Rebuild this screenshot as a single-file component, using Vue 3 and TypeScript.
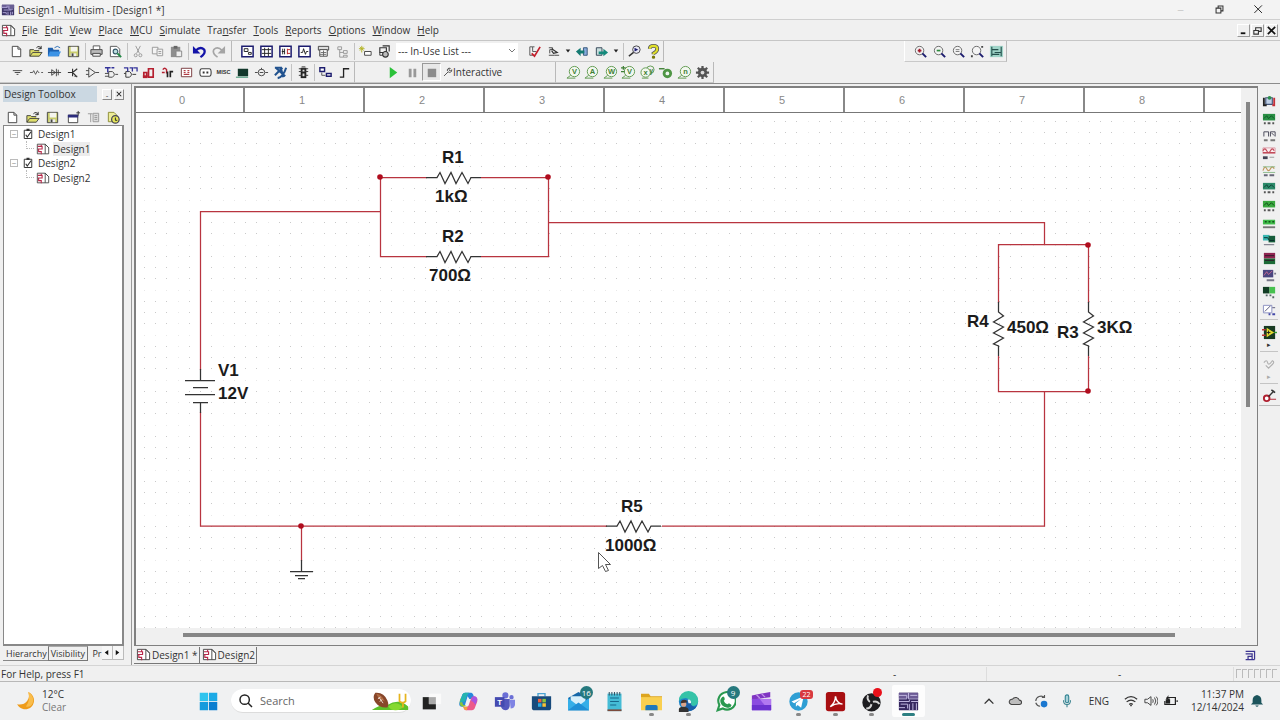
<script setup lang="ts">
import { h } from 'vue'

interface Shape {
  d?: string
  t?: string
  x?: number
  y?: number
  s?: number
  f?: string
  k?: string
  w?: number
}

const disc = (x: number, y: number, r: number) =>
  `M${x - r} ${y}a${r} ${r} 0 1 0 ${2 * r} 0a${r} ${r} 0 1 0 ${-2 * r} 0z`
const box = (x: number, y: number, w: number, ht: number) => `M${x} ${y}h${w}v${ht}h${-w}z`
const fill = (d: string, f: string): Shape => ({ d, f })
const line = (d: string, k: string, w = 1, f = 'none'): Shape => ({ d, k, w, f })
const label = (t: string, x: number, y: number, s: number, f: string): Shape => ({ t, x, y, s, f })

const ink = '#444'
const navy = '#1c1c6e'
const olive = '#5f9a4f'
const lens = (inside: Shape[]): Shape[] => [
  line(disc(7, 7, 4.5), '#666', 1, '#f4f4f4'),
  line('M10 10l4 4', navy, 2),
  ...inside,
]
const probe = (t: string): Shape[] => [
  line(disc(9, 7, 5.5), olive, 1, '#f2f7ef'),
  line('M5 11l-4 3h9', olive),
  label(t, 9, 10, 8, '#3f7f35'),
]
const framed = (inside: Shape[]): Shape[] => [
  line(box(2, 2.5, 12, 11), navy, 1.6, '#fff'),
  ...inside,
]
const instrument = (top: string, mark: string, base = '#555'): Shape[] => [
  fill(box(1, 2, 13, 7), top),
  line('M2 7l3 -3 2 3 3 -3 3 3', mark),
  fill(box(2, 11, 2, 2) + box(6, 11, 3, 2) + box(11, 11, 2, 2), base),
]
const schematic: Shape[] = [
  line('M1.5 2.5h9l4 4v7h-13z', ink, 1, '#fff'),
  line('M10.5 2.5v11M10.5 2.5l4 4', ink),
  line('M2 5h5v3h-4v3h3v3M6 3v2M2 8h2', '#b8284a', 1.2),
]

const icons: Record<string, Shape[]> = {
  app: [
    fill(box(1, 2, 14, 12), '#3d3568'),
    fill(box(1, 2, 14, 4), '#6a5f94'),
    line('M1 5h6v-2M9 3v4h5M3 8h9M2 11h4v2M8 10v4M11 10v4M13 10v3', '#b7aee0'),
  ],
  schematic,
  blank: [line('M3.5 2.5h6l3 3v8h-9z', ink, 1, '#fff'), line('M9.5 2.5v3h3', ink)],
  open: [
    fill('M2 6h4l1 1h5v6h-10z', '#c9c94a'),
    line('M2 13v-7h4l1 1h5M2 13l3 -4h10l-3 4z', ink, 1, '#dede6a'),
    line('M9 4q3 -3 5 1m0 -3v3h-3', '#222'),
  ],
  folder: [
    fill('M1 4h5l1 2h6v7h-12z', '#1d5fae'),
    fill('M3 8h12l-3 5h-11z', '#3c93e6'),
    line('M8 4q3 -3 6 0', '#2c6db4'),
  ],
  save: [
    line(box(2.5, 2.5, 11, 11), ink, 1, '#c9cd6d'),
    fill(box(5, 3, 7, 5), '#f5f5ee'),
    fill(box(5, 10, 6, 3), '#eee'),
    fill(box(6, 10, 2, 3), '#444'),
  ],
  print: [
    line('M4.5 6v-4h7v4', '#555', 1, '#fff'),
    line(box(2, 6, 12, 5), ink, 1, '#bbb'),
    line('M4 10h8v3h-8z', ink, 1, '#eee'),
  ],
  preview: [
    line('M2.5 2.5h7l3 3v8h-10z', '#555', 1, '#fff'),
    line(disc(8, 8, 2.5), '#356', 1.2, '#bfe0e0'),
    line('M10 10l4 4', '#284', 2),
  ],
  cut: [line('M5 2l4 8M10 2l-4 8', '#999'), line(disc(5, 12, 1.6) + disc(10, 12, 1.6), '#999')],
  copy: [line(box(2.5, 3.5, 6, 7), '#999', 1, '#f4f4f4'), line(box(7.5, 5.5, 6, 7), '#999', 1, '#f4f4f4'), line('M9 8h3M9 10h3', '#999')],
  paste: [fill(box(2, 3, 10, 11), '#8e8e8e'), fill(box(5, 2, 4, 3), '#666'), line(box(7.5, 7.5, 6, 6), '#888', 1, '#eee')],
  undo: [line('M4 7q5 -5 9 -1q2 4 -4 8', '#1414a8', 2.4), fill('M1 2v8h8z', '#1414a8')],
  redo: [line('M12 7q-5 -5 -9 -1q-2 4 4 8', '#a5a5a5', 1.8), fill('M15 2v8h-8z', '#a5a5a5')],
  hier: framed([line(box(4.5, 5, 4, 3) + box(9, 9, 3, 2), '#222')]),
  sheet: framed([line('M3 6h10M3 10h10M6 4v9M10 4v9', '#222')]),
  netlist: framed([line('M4 8h3M7 5v6M5 5v6', '#222'), line('M10 5v6M10 6h3M10 10h3', '#b22')]),
  graph: framed([line('M4 9l2 0 1 -4 2 6 1 -3h2', '#222')]),
  post: [line(box(2.5, 2.5, 11, 4), ink, 1, '#ddd'), line(box(4, 6, 8, 7), ink, 1, '#fff'), line('M5 9h6M8 7v6M4 11h7', '#666')],
  tree: [line('M3 3h4v3h-4zM5 6v8h4M5 9h4', '#999'), line(box(9, 7, 4, 3) + box(9, 12, 4, 2), '#999')],
  wizard: [line('M4 2v7M1 5h6M2 3l4 4M6 3l-4 4', '#b3b326'), line(box(7, 8, 7, 4), ink, 1, '#fff')],
  database: [line('M3 4h7v5h-7zM6 2h7v6', '#333', 1.2), line(disc(9, 11, 3), '#333', 1.2, '#bbb'), line('M3 12h3M3 9v3', '#333')],
  erc: [line('M6 3h-3v9h4M8 3h-2v5h4', '#555'), line('M5 10l3 3 6 -10', '#c4202c', 1.8)],
  move: [line('M3 4h4v2h-3M3 12h6M4 6v4', ink), line('M6 5l6 4 -4 1 -2 -3', '#333', 1.3), line('M9 12h5', ink)],
  back: [line(box(9, 4, 4, 8), '#357', 1, '#8ad'), fill('M1 8l5 -4v3h4v3h-4v3z', '#157a72')],
  forward: [line('M2.5 4h6v8h-6z', '#345', 1, '#c9dede'), fill('M15 9l-5 -4v3h-5v3h5v2z', '#158a7c')],
  find: [line(disc(10, 6, 4), ink, 1, '#e8e8f6'), fill('M8 4l4 2 -4 2z', navy), line('M7 9l-5 4', '#333', 1.6)],
  help: [line('M4 5q0 -3 4 -3t4 3 -4 5v1', '#555', 4), line('M4 5q0 -3 4 -3t4 3 -4 5v1', '#e0e02a', 2.2), fill(disc(8, 14, 1.8), '#77770a')],
  zin: lens([line('M5 7h4M7 5v4', '#a01c2c', 1.8)]),
  zout: lens([line('M5 7h4', '#2d8a3c', 1.8)]),
  zarea: lens([line('M5 6h4M5 8h4', '#777')]),
  zfit: [...lens([]), fill(box(12, 2, 2, 2) + box(1, 12, 2, 2), '#444')],
  full: [fill(box(1, 2, 14, 12), '#9fd4c8'), line('M3 3v10M13 3v10M3 6h7M6 9h7M3 11h8', '#24504c', 1.2)],
  source: [line('M3 6h10M5 8h6M7 10h2', ink)],
  basic: [line('M1 8h3l1 -2 2 4 2 -4 1 2h1M13 8h2', '#555')],
  diode: [line('M1 8h14M5 5v6l4 -3zM10 4v8M12 5v6', ink)],
  transistor: [line('M2 8h5M7 4v8M7 8l5 -4M7 8l5 5M9 12h3', '#333', 1.2)],
  analog: [line('M4 3v10l7 -5zM1 6h3M1 10h3M11 8h4', ink)],
  ttl: [line('M5 7v6h4q4 -3 0 -6zM1 9h4M1 12h4M12 10h3', ink), line('M1 3h6M4 3v5M8 3h3', '#33339a', 1.5)],
  cmos: [line('M3 7v6h4q4 -3 0 -6zM1 9h2M10 10h4', '#333'), line('M1 3h4v4M7 3h3v4M11 3h4v4', '#33339a', 1.4)],
  digital: [line('M3 13v-5h3v5M8 13v-9h5v9z', '#b52030', 1.8), fill(box(2, 11, 5, 3), '#b52030')],
  mixed: [line('M3 5q2 -3 4 0v4M2 8h3', '#b52030', 1.5), line('M8 7v6M11 13v-6h3', '#222', 1.8)],
  indicator: [line(box(2.5, 3.5, 11, 9), '#77373b', 1, '#fff'), line('M5 6h2M9 6h2M5 8h2M9 8h2M5 10h6', '#b23b44', 1.3)],
  power: [line('M4 4h8q2 0 2 4t-2 4h-8q-2 0 -2 -4t2 -4z', ink, 1.2, '#fff'), fill(box(5, 7, 2, 2) + box(9, 7, 2, 2), '#333')],
  misc: [label('MISC', 8, 10, 6, '#333')],
  advanced: [fill(box(3, 4, 11, 8), '#12382c'), line('M1 13h13', '#2c8a66')],
  rf: [line('M1 8h3M12 8h3' + disc(8, 8, 3.5) + 'M6 8h4M8 5v-2', ink)],
  electro: [line('M3 3l10 9M8 2l3 11M2 11l8 -8M5 14q6 -1 9 -11M2 3h6', '#22538f', 2.2)],
  mcu: [fill(box(5, 3, 6, 11), '#222'), line('M3 4h10M3 7h10M3 11h10M6 2h4', '#333'), fill(box(7, 5, 2, 2) + box(7, 9, 2, 3), '#ddd')],
  block: [line(box(2, 3, 5, 4), navy, 1.5, '#fff'), line(box(9, 9, 5, 3), navy, 1.5, '#fff'), line('M4 8v3h4', '#555')],
  bus: [line('M3 13h4v-9h6', '#222', 1.4)],
  play: [fill('M4 2l8 6 -8 6z', '#2bc23a')],
  pause: [fill(box(4, 4, 3, 9) + box(9, 4, 3, 9), '#999')],
  stop: [fill(box(4, 4, 9, 9), '#8b8b8b')],
  wrench: [line('M3 13l6 -6M8 6a3 3 0 0 1 4 -4l-2 2 2 2 2 -2a3 3 0 0 1 -5 3', ink, 1.3)],
  pv: probe('V'),
  pa: probe('A'),
  pw: probe('W'),
  pd: [...probe('V'), line('M0 3h5M2.5 1v4M0 7h4', '#3f7f35', 1.3)],
  px: [line(disc(11, 5, 4), olive), line(disc(6, 8, 5), olive, 1, '#f2f7ef'), label('x', 6, 11, 8, '#3f7f35'), label('y', 12, 8, 7, '#3f7f35'), line('M2 14h7', olive)],
  pr: [line('M1 4h6', '#3f7f35', 1.5), fill(disc(10, 9, 5), '#4f9545'), fill(disc(10, 9, 2), '#eef5ee')],
  pn: probe('n'),
  gear: [line('M8 1v14M1 8h14M3 3l10 10M13 3l-10 10', '#555', 2.4), fill(disc(8, 8, 5), '#555'), fill(disc(8, 8, 2), '#ddd')],
  rename: [line(box(2.5, 5.5, 10, 8), ink, 1, '#fff'), fill(box(2, 5, 11, 3), '#2d2d7c'), line('M13 1v5M11 3h4', '#333')],
  props: [line('M2 4h5M5 4v9', '#999'), line(box(7.5, 3.5, 6, 9), '#999', 1, '#ddd'), line('M9 6h3M9 8h3M9 10h3', '#999')],
  recent: [line('M2.5 2.5h6l3 3v7h-9z', '#8c8c35', 1, '#ecec9a'), line(disc(10, 10, 4), '#445', 1.3, '#e6e65a'), line('M10 8v3h2', '#222')],
  clip: [line(box(3, 3, 10, 11), '#333', 1.3, '#fff'), fill(box(6, 1, 4, 3), '#333'), line('M5 9l2 3 5 -7', '#333', 1.5)],
  multimeter: [line(box(4, 4, 7, 7), '#457', 1.2, '#bfd0e6'), line('M2 4v8h3', '#222', 2), line('M13 4v8h-2', '#c4303a', 2), fill(disc(8, 4, 2), '#2e8f4d')],
  fgen: instrument('#2a8f45', '#0e5a26'),
  watt: [line('M2 8v-5h5v5M9 8v-5h5v5M10 4l3 3', '#445'), fill(box(2, 11, 4, 2) + box(9, 11, 5, 2), '#777')],
  scope: [line(box(1, 2, 13, 6), '#dba0aa', 1, '#fbeef0'), line('M1 5q2 -4 4 0t4 0 4 0M1 7h13', '#c24b5a', 1.2), fill(box(1, 11, 5, 3), '#445'), line('M8 12h5', '#999')],
  scope4: [line('M1 7q2 -6 4 -2t4 0 4 0', '#c0965a', 1.2), line('M1 3h13M1 9h13', '#8aba8a'), fill(box(2, 11, 4, 2) + box(8, 11, 5, 2), '#667')],
  bode: instrument('#2c8a6a', '#0c3f34'),
  freq: instrument('#3aa83f', '#104d16'),
  word: [fill(box(1, 4, 13, 5), '#3fbb49'), line('M3 6h2M7 6h2M11 6h2', '#124f18', 1.6), fill(box(1, 11, 13, 2), '#777')],
  converter: [fill(box(1, 2, 7, 6), '#39b7b2'), fill(box(7, 3, 7, 7), '#165c3a'), line('M2 5h4l2 3h5', '#0a2c2c'), fill(box(2, 12, 11, 1), '#667')],
  logic: [fill(box(2, 2, 12, 6), '#8e2450'), fill(box(2, 8, 12, 6), '#1c6a36'), line('M3 10h10M3 5h10', '#2b1a26')],
  iv: [fill(box(1, 2, 11, 8), '#4a4680'), line('M2 8l3 -4 2 3 4 -4', '#c66a90'), fill(box(5, 12, 8, 2) + box(13, 5, 2, 2), '#778')],
  spectrum: [fill(box(1, 2, 7, 7), '#123c24'), fill(box(8, 2, 6, 7), '#47c14f'), fill(box(4, 10, 2, 2) + box(8, 10, 2, 2) + box(11, 12, 2, 2), '#566')],
  network: [line(box(1.5, 2.5, 9, 8), '#8a8fc0', 1, '#fff'), line('M3 9l6 -6M11 5h3', '#557'), fill(box(7, 11, 2, 2) + box(11, 11, 3, 2), '#4348a8')],
  labview: [fill(box(2, 1, 12, 14), '#183a22'), fill('M5 3l8 5 -8 5z', '#e4dc30'), line('M0 5h4M0 11h4', '#b33', 1.5), line('M13 8h3', '#393', 1.5), line('M7 6v4M5 8h4', '#222')],
  clamp: [line('M2 6q3 -4 4 0t5 -2q3 1 0 4l-4 4 -3 -3', '#b0b0b0', 1.2)],
  current: [line(disc(5, 11, 3), '#b02030', 2, '#fff'), line('M7 9l6 -6M10 2l4 3', '#333', 1.6), line('M8 12h7', '#b02030')],
  trayapp: [line('M2 3h11v10M2 6h8v7M5 9h5v4h-5zM2 13h11', '#3c3490', 1.5)],
  moon: [fill('M11 1a8 8 0 1 1 -10 11q6 1 9 -3t1 -8z', '#ee9c1c'), fill('M11 1a8 8 0 0 1 4 10q-2 4 -6 3q4 -5 2 -13z', '#f9bd4c')],
  windows: [fill(box(2, 2, 9.5, 9.5), '#2ec4ee'), fill(box(12.5, 2, 9.5, 9.5), '#1caae6'), fill(box(2, 12.5, 9.5, 9.5), '#169bdd'), fill(box(12.5, 12.5, 9.5, 9.5), '#0b7ed0')],
  search: [line(disc(10, 10, 7) + 'M15 15l6 6', '#222', 2.2)],
  football: [
    fill('M1 22q7 -6 18 -6 14 -8 24 2v4z', '#5dc02a'), fill('M20 18q9 -8 17 1 -7 5 -14 2z', '#86d930'),
    fill('M5 2q10 -1 14 9 2 5 0 8 -9 1 -14 -6 -4 -6 0 -11z', '#87462a'), fill('M6 3q7 1 10 9 -8 -3 -10 -9z', '#b06a42'),
    line('M9 7l5 7M8 9l3 -2M10 12l3 -2', '#f4e7dd'), line('M33 3v9q4 3 7 0v-9M37 13v6', '#e6b41e', 2),
  ],
  taskview: [fill(box(2, 7, 15, 14), '#222'), fill(box(9, 3, 14, 12), '#fafafa'), fill(box(9, 7, 8, 8), '#aaa')],
  copilot: [
    fill('M8 2h7q2 0 3 4l1 3h-6l-2 -3 -3 10q-1 2 -3 2 -5 0 -3 -6l3 -8q1 -2 3 -2z', '#2787dc'),
    fill('M2 13q0 -3 1 -5l3 8h3q-1 2 -3 2 -4 0 -4 -5z', '#8ac43c'), fill('M8 2h5q-3 2 -5 10l-6 1 3 -9q1 -2 3 -2z', '#25b4b0'),
    fill('M16 22h-7q-2 0 -3 -4h4q2 0 3 -4l2 -6q1 -2 4 -2 4 1 3 6l-3 8q-1 2 -3 2z', '#ec5a8a'), fill('M6 18h5l-1 4q-3 0 -4 -4z', '#f3a43c'),
    fill('M18 6q4 0 4 4l-2 6q-2 -4 -5 -5l1 -3q0 -2 2 -2z', '#a954e0'),
  ],
  teams: [
    fill(disc(13, 5, 3.5) + disc(20, 7, 2.5), '#6b6fd6'), fill('M9 9h9v8q-1 5 -5 5 -5 -1 -5 -5z', '#5458bd'), fill('M18 10h6v6q-1 4 -5 4z', '#7f84e4'),
    fill(box(1, 7, 11, 11), '#444ab0'), label('T', 6.5, 16, 9, '#fff'),
  ],
  store: [
    line('M8 6v-3h8v3', '#4aa3d4', 1.6), fill('M1 6h22v13q0 3 -3 3h-16q-3 0 -3 -3z', '#174a7c'),
    fill(box(8, 9, 4, 4), '#f0603c'), fill(box(13, 9, 4, 4), '#8cc63f'), fill(box(8, 14, 4, 4), '#29abe2'), fill(box(13, 14, 4, 4), '#fbc234'),
  ],
  mail: [fill('M0 8l12 -7 12 7v14h-24z', '#1767a8'), fill('M3 6h17v10h-17z', '#d8effa'), fill('M0 8l12 9 12 -9v14h-24z', '#35aee8'), fill('M0 22l12 -9 12 9z', '#1f8fd6')],
  notepad: [fill(box(4, 3, 16, 20), '#45bcd6'), fill(box(4, 21, 16, 2), '#7c4a3c'), line('M7 8h10M7 12h10M7 16h7', '#17678a', 1.4), line('M6 1v4M9 1v4M12 1v4M15 1v4M18 1v4', '#356', 1.2)],
  explorer: [fill('M0 3h9l2 3h13v5h-24z', '#dda520'), fill(box(0, 7, 24, 15), '#f9cf50'), fill('M5 22v-4q0 -2 2 -2h10q2 0 2 2v4z', '#2078bc')],
  edge: [
    fill(disc(12, 12, 11), '#1c83c8'), fill('M1 11a11 11 0 0 1 22 0q0 5 -5 6 -4 0 -4 -3 0 -5 -5 -6 -5 0 -8 3z', '#35c3a8'),
    fill('M10 10q6 -1 5 6 4 4 7 0 -3 7 -10 7 -6 -4 -2 -13z', '#1a5ea8'), fill('M11 10q4 -1 4 4l-3 0z', '#e8f6fa'),
    fill('M1 24v-3q0 -3 5 -3t6 3v3z', '#333'), fill(disc(6.5, 15, 3), '#d9a58c'), fill('M3 14q0 -4 4 -4t3 3z', '#44342e'),
  ],
  whatsapp: [
    line('M3 22l2 -6a10 10 0 1 1 4 4z', '#2a9950', 2.4, '#fff'),
    fill('M8 7q2 -2 3 1l0 2 -1 1q1 3 4 4l2 -1 3 2q-1 4 -5 3 -8 -2 -8 -8 0 -2 2 -4z', '#2a9950'),
  ],
  clipchamp: [fill('M1 5l21 -4v6l-21 3z', '#8035c2'), line('M6 4l4 4M12 3l4 4', '#c294ea', 1.5), fill(box(1, 9, 22, 13), '#8b4ce0'), fill('M10 9h13v13h-3z', '#b278f0'), fill('M1 16h22v6h-22z', '#6c32cf')],
  telegram: [fill(disc(12, 12, 10.5), '#2f9fd4'), fill('M4 12l14 -6 -3 13 -4 -3 -2 2v-4l6 -5 -8 5z', '#fff')],
  acrobat: [fill('M4 1h16q3 0 3 3v16q0 3 -3 3h-16q-3 0 -3 -3v-16q0 -3 3 -3z', '#a80f12'), line('M6 18q6 -5 6 -12 1 8 8 9 -7 -2 -14 3z', '#fff', 1.7)],
  obs: [fill(disc(12, 13, 10.5), '#1d1d20'), line('M12 13q-6 -2 -4 -8M12 13q6 -3 9 2M12 13q0 7 -6 7', '#d5d5d5', 2.2), fill(disc(12, 13, 2), '#1d1d20')],
  multisim: [
    fill(box(1, 2, 22, 20), '#35275f'), fill(box(1, 2, 22, 6), '#6b5a94'),
    line('M1 5h9v4h-9M12 2v7h11M14 5h8M1 12h12v-2M3 15h8v5M15 12h8M13 15v7M17 14v8M21 14v8M1 19h7', '#c4bbe4', 1.1),
  ],
  chevron: [line('M3 11l5 -5 5 5', '#333', 1.5)],
  cloud: [line('M4 12h9a2.5 2.5 0 0 0 0 -5a4.5 4.5 0 0 0 -8 -1a3 3 0 0 0 -1 6z', ink, 1.2, '#bdbdbd')],
  sync: [line('M2 8a6 6 0 0 1 10 -4m0 -3v3h-3M7 14a6 6 0 0 1 -5 -4', '#555', 1.3), fill(disc(11.5, 11.5, 3.8), '#1b78d0')],
  mic: [line('M8 1a2 2 0 0 1 2 2v5a2 2 0 0 1 -4 0v-5a2 2 0 0 1 2 -2z', '#2a7f8f', 1.2, '#a7d0d8'), line('M4 7q0 5 4 5t4 -5M8 12v3', '#357f8c', 1.2)],
  wifi: [line('M1 6q7 -6 14 0M3 9q5 -4 10 0M6 12q2 -2 4 0', '#333', 1.4), fill(disc(8, 13, 1), '#333')],
  volume: [line('M1 6h3l4 -3v10l-4 -3h-3zM10 6q1 2 0 4M12 4q3 4 0 8M14 3q4 5 0 10', ink, 1.1)],
  battery: [line('M3 4h10v8h-12v-4M15 7v2', '#222', 1.4), fill(box(2, 6, 5, 5), '#222'), fill('M5 1l-3 5h2l-1 4 4 -5h-2z', '#222')],
  bell: [fill('M8 1q5 1 5 6v3l2 2h-14l2 -2v-3q0 -5 5 -6zM6 13h4q-2 3 -4 0z', '#1c545c')],
}

const Icon = (p: { name: string; box?: string }) =>
  h(
    'svg',
    { class: 'icon', viewBox: p.box ?? '0 0 16 16', 'aria-hidden': 'true' },
    (icons[p.name] ?? []).map((s) =>
      s.t
        ? h('text', { x: s.x, y: s.y, 'font-size': s.s, fill: s.f, 'text-anchor': 'middle', 'font-weight': 'bold', 'font-family': 'Liberation Sans, sans-serif' }, s.t)
        : h('path', { d: s.d, fill: s.f, stroke: s.k, 'stroke-width': s.w }),
    ),
  )
Icon.props = ['name', 'box']

const menus = [
  ['', 'F', 'ile'], ['', 'E', 'dit'], ['', 'V', 'iew'], ['', 'P', 'lace'], ['', 'M', 'CU'], ['', 'S', 'imulate'],
  ['Tra', 'n', 'sfer'], ['', 'T', 'ools'], ['', 'R', 'eports'], ['', 'O', 'ptions'], ['', 'W', 'indow'], ['', 'H', 'elp'],
]
const standard = ['blank', 'open', 'folder', 'save', '|', 'print', 'preview', '|', 'cut', 'copy', 'paste', '|', 'undo', 'redo']
const views = ['hier', 'sheet', 'netlist', 'graph', 'post', 'tree', '|', 'wizard', 'database']
const tools = ['erc', 'move', '>', 'back', 'forward', '>', '|', 'find', 'help']
const zooms = ['zin', 'zout', 'zarea', 'zfit', 'full']
const components = ['source', 'basic', 'diode', 'transistor', 'analog', 'ttl', 'cmos', 'digital', 'mixed', 'indicator', 'power', 'misc', 'advanced', 'rf', 'electro']
const probes = ['pv', 'pa', 'pw', 'pd', 'px', 'pr', 'pn', 'gear']
const instruments = ['multimeter', 'fgen', 'watt', 'scope', 'scope4', 'bode', 'freq', 'word', 'converter', 'logic', 'iv', 'spectrum', 'network']
const toolboxTools = ['blank', 'open', 'save', 'rename', 'props', 'recent']
const designs = ['Design1', 'Design2']

const apps: { icon: string; badge?: string; tone?: string; run?: boolean; active?: boolean }[] = [
  { icon: 'taskview' }, { icon: 'copilot' }, { icon: 'teams' }, { icon: 'store' },
  { icon: 'mail', badge: '16' }, { icon: 'notepad' }, { icon: 'explorer', run: true }, { icon: 'edge', run: true },
  { icon: 'whatsapp', badge: '9' }, { icon: 'clipchamp' }, { icon: 'telegram', badge: '22', tone: 'red', run: true },
  { icon: 'acrobat', run: true }, { icon: 'obs', badge: ' ', tone: 'dot', run: true }, { icon: 'multisim', run: true, active: true },
]

const ruler = [0, 1, 2, 3, 4, 5, 6, 7, 8]
const zig = 'l3 -5 5 11 6 -11 5 11 6 -11 6 11 3 -6'
const zigDown = 'l5 4 -10 6 10 5 -10 6 10 5 -10 6 5 2'
const wires = [
  'M64.5 257V98.5H244.5', 'M291 64.5H244.5V143.5H291', 'M345 64.5H412.5V143.5H345', 'M412.5 109.5H908.5V131.5',
  'M862.5 190V131.5H952.5V190', 'M862.5 243V278.5H952.5V243', 'M908.5 278.5V413H526', 'M471 413H64.5V299', 'M165.5 413V448',
]
const parts = [
  `M290 64.5h11${zig}h10`, `M290 143.5h11${zig}h10`, `M470 413h11${zig}h10`,
  `M862.5 189v10${zigDown}v10`, `M952.5 189v10${zigDown}v10`,
  'M64.5 256v11M49 267.5h30M57 274.5h15M49 281.5h30M57 289.5h15M64.5 290v10',
  'M165.5 447v11M154 458.5h23M159 462.5h13M162 465.5h7',
]
const nodes = [[244, 64], [412, 64], [952, 132], [952, 278], [165, 413]]
const labels: [string, number, number][] = [
  ['R1', 306, 50], ['1kΩ', 299, 89], ['R2', 306, 129], ['700Ω', 293, 168], ['V1', 82, 263], ['12V', 82, 286],
  ['R4', 831, 214], ['450Ω', 871, 220], ['R3', 921, 225], ['3KΩ', 961, 220], ['R5', 485, 399], ['1000Ω', 469, 438],
]
</script>

<template>
  <div class="desktop">
    <header class="titlebar">
      <Icon name="app" />
      <span class="grow">Design1 - Multisim - [Design1 *]</span>
      <button class="win dim" aria-label="Minimize">─</button>
      <button class="win" aria-label="Restore"><svg class="icon" viewBox="0 0 16 16"><path d="M3 6h7v7h-7zM6 6v-3h7v7h-3" fill="none" stroke="#333" stroke-width="1.5" /></svg></button>
      <button class="win" aria-label="Close"><svg class="icon" viewBox="0 0 16 16"><path d="M2 2l11 11M13 2l-11 11" stroke="#222" stroke-width="1.4" /></svg></button>
    </header>

    <nav class="menubar">
      <Icon name="schematic" />
      <div class="menus grow">
        <button v-for="m in menus" :key="m.join('')">{{ m[0] }}<u>{{ m[1] }}</u>{{ m[2] }}</button>
      </div>
      <button class="mdi" aria-label="Minimize document"><svg class="icon" viewBox="0 0 12 12"><path d="M3 9h5" stroke="#111" stroke-width="2" /></svg></button>
      <button class="mdi" aria-label="Restore document"><svg class="icon" viewBox="0 0 12 12"><path d="M2 6h5v4h-5zM4 6v-3h6v4h-3" fill="none" stroke="#333" stroke-width="1.2" /></svg></button>
      <button class="mdi" aria-label="Close document"><svg class="icon" viewBox="0 0 12 12"><path d="M2 2l8 8M10 2l-8 8" stroke="#111" stroke-width="1.8" /></svg></button>
    </nav>

    <div class="toolrow">
      <div class="group lead">
        <template v-for="(t, i) in standard" :key="i"><span v-if="t === '|'" class="sep"></span><button v-else class="tool" :aria-label="t"><Icon :name="t" /></button></template>
      </div>
      <div class="group mid">
        <template v-for="(t, i) in views" :key="i"><span v-if="t === '|'" class="sep"></span><button v-else class="tool" :aria-label="t"><Icon :name="t" /></button></template>
        <select class="inuse" aria-label="In-use list"><option>--- In-Use List ---</option></select>
        <template v-for="(t, i) in tools" :key="'t' + i">
          <span v-if="t === '|'" class="sep"></span><button v-else-if="t === '>'" class="caret" aria-label="More"><svg class="icon" viewBox="0 0 8 8"><path d="M1 2h6l-3 4z" fill="#222" /></svg></button><button v-else class="tool" :aria-label="t"><Icon :name="t" /></button>
        </template>
      </div>
      <div class="group zooms">
        <button v-for="t in zooms" :key="t" class="tool" :aria-label="t"><Icon :name="t" /></button>
      </div>
    </div>

    <div class="toolrow">
      <div class="group comps">
        <button v-for="t in components" :key="t" class="tool" :aria-label="t"><Icon :name="t" /></button>
        <span class="sep"></span><button class="tool" aria-label="mcu"><Icon name="mcu" /></button>
        <span class="sep"></span><button class="tool" aria-label="block"><Icon name="block" /></button><button class="tool" aria-label="bus"><Icon name="bus" /></button>
      </div>
      <div class="group sim">
        <button class="tool" aria-label="Run"><Icon name="play" /></button>
        <button class="tool" aria-label="Pause"><Icon name="pause" /></button>
        <button class="tool pressed" aria-label="Stop"><Icon name="stop" /></button>
        <button class="analysis"><Icon name="wrench" />Interactive</button>
      </div>
      <div class="group probes">
        <button v-for="t in probes" :key="t" class="tool" :aria-label="t"><Icon :name="t" /></button>
      </div>
    </div>

    <main class="workspace">
      <aside class="toolbox">
        <div class="boxhead">
          <h2>Design Toolbox</h2>
          <button aria-label="Collapse">-</button>
          <button aria-label="Close toolbox"><svg class="icon" viewBox="0 0 8 8"><path d="M1 1l6 6M7 1l-6 6" stroke="#222" stroke-width="1.4" /></svg></button>
        </div>
        <div class="boxtools">
          <button v-for="t in toolboxTools" :key="t" :aria-label="t"><Icon :name="t" /></button>
        </div>
        <ul class="tree">
          <li v-for="(d, i) in designs" :key="d">
            <div class="node"><span class="twist">−</span><Icon name="clip" /><span>{{ d }}</span></div>
            <div class="node leaf"><span class="elbow"></span><Icon name="schematic" /><span :class="{ current: i === 0 }">{{ d }}</span></div>
          </li>
        </ul>
        <div class="boxtabs">
          <button class="on">Hierarchy</button><button class="edge">Visibility</button><button class="cut">Pr</button>
          <button class="nudge" aria-label="Previous"><svg class="icon" viewBox="0 0 8 8"><path d="M6 1v6l-4 -3z" fill="#111" /></svg></button>
          <button class="nudge" aria-label="Next"><svg class="icon" viewBox="0 0 8 8"><path d="M2 1v6l4 -3z" fill="#111" /></svg></button>
        </div>
      </aside>

      <section class="editor">
        <div class="frame">
          <div class="sheet">
            <div class="ruler"><span v-for="n in ruler" :key="n">{{ n }}</span><span class="rest"></span></div>
            <svg class="circuit" role="img" aria-label="Circuit diagram">
              <defs>
                <pattern id="dots" width="45" height="45" patternUnits="userSpaceOnUse" x="18" y="18">
                  <g v-for="y in [1, 12, 24, 35]" :key="y">
                    <rect v-for="x in [1, 12, 24, 35]" :key="x" :x="x" :y="y" width="1" height="1" :fill="x === 24 || y === 24 ? '#e8e8e8' : '#c9c9c9'" />
                  </g>
                </pattern>
              </defs>
              <rect width="100%" height="100%" fill="url(#dots)" />
              <path v-for="w in wires" :key="w" :d="w" class="wire" />
              <path v-for="p in parts" :key="p" :d="p" class="part" />
              <circle v-for="n in nodes" :key="n.join()" :cx="n[0]" :cy="n[1]" r="2.8" class="joint" />
              <text v-for="l in labels" :key="l[0]" :x="l[1]" :y="l[2]">{{ l[0] }}</text>
              <path class="cursor" d="M462.5 439.5v16l4 -3 3 6 3 -1 -3 -6h5z" />
            </svg>
          </div>
          <div class="vscroll"><i></i></div>
          <div class="hscroll"><i></i></div>
        </div>
        <div class="doctabs">
          <button class="on"><Icon name="schematic" />Design1 *</button>
          <button><Icon name="schematic" />Design2</button>
          <span class="grow"></span>
          <Icon name="trayapp" />
        </div>
      </section>

      <aside class="instruments">
        <div class="stack">
          <button v-for="t in instruments" :key="t" :aria-label="t"><Icon :name="t" /></button>
        </div>
        <div class="extra"><button aria-label="LabVIEW instruments"><Icon name="labview" /></button><small>▸</small></div>
        <div class="extra"><button aria-label="Clamp"><Icon name="clamp" /></button><small class="dim">▸</small></div>
        <div class="extra last"><button aria-label="Current probe"><Icon name="current" /></button></div>
      </aside>
    </main>

    <footer class="status">
      <span class="grow">For Help, press F1</span>
      <span class="cell">-</span><span class="cell empty"></span><span class="cell">-</span>
      <span class="keys"><i v-for="k in 7" :key="k"></i></span>
    </footer>

    <div class="taskbar">
      <button class="weather"><Icon name="moon" box="0 0 18 18" /><span>12°C<small>Clear</small></span></button>
      <button class="start" aria-label="Start"><Icon name="windows" box="0 0 24 24" /></button>
      <label class="find"><Icon name="search" box="0 0 24 24" /><input type="search" placeholder="Search" aria-label="Search" /><Icon name="football" box="0 0 44 23" class="ball" /></label>
      <div class="apps">
        <button v-for="a in apps" :key="a.icon" :class="{ active: a.active, run: a.run }" :aria-label="a.icon">
          <span class="appicon"><Icon :name="a.icon" box="0 0 24 24" /><b v-if="a.badge" :class="a.tone">{{ a.badge }}</b></span>
        </button>
      </div>
      <div class="tray">
        <Icon name="chevron" /><Icon name="cloud" /><Icon name="sync" /><Icon name="mic" />
        <span class="lang">ENG</span>
        <span class="net"><Icon name="wifi" /><Icon name="volume" /><Icon name="battery" /></span>
        <time>11:37 PM<br />12/14/2024</time>
        <Icon name="bell" />
      </div>
    </div>
  </div>
</template>

<style>
body { margin: 0; overflow: hidden; }
</style>

<style scoped>
.desktop { display: flex; flex-direction: column; min-height: 100vh; background: #f0f0f0; color: #333; font-family: 'Open Sans', 'Noto Sans', sans-serif; font-size: 10px; line-height: 14px; }
.desktop * { box-sizing: border-box; }
button { font: inherit; color: inherit; background: none; border: 0; padding: 0; margin: 0; }
.icon { width: 15px; height: 15px; flex: none; display: block; }
.grow { flex: 1; }
.titlebar { display: flex; align-items: center; height: 20px; background: #f3f3f3; border-bottom: 1px solid #cfcfcf; }
.titlebar > .icon { width: 14px; height: 14px; margin: 0 3px 0 1px; }
.win { width: 39px; display: flex; justify-content: center; }
.win .icon { width: 11px; height: 11px; }
.win.dim { color: #bbb; font-size: 8px; }
.win:last-child { margin-right: 2px; }
.menubar { display: flex; align-items: center; height: 21px; border-bottom: 1px solid #c6c6c6; padding-right: 2px; }
.menubar > .icon { margin: 0 1px; }
.menus { display: flex; padding-left: 2px; }
.menus button { padding: 0 4px 0 3px; }
.mdi { width: 13px; height: 13px; margin-left: 1px; border: 1px solid; border-color: #fff #999 #999 #fff; display: grid; place-items: center; }
.mdi .icon { width: 11px; height: 11px; }
.toolrow { display: flex; height: 21px; }
.group { display: flex; align-items: center; height: 21px; border-right: 1px solid #b9b9b9; border-bottom: 1px solid #c9c9c9; }
.tool { width: 19px; flex: none; display: grid; place-items: center; height: 18px; }
.sep { width: 4px; flex: none; height: 17px; display: flex; justify-content: center; }
.sep::before { content: ''; border-left: 1px solid #c2c2c2; }
.lead { width: 232px; padding-left: 7px; }
.mid { padding-left: 6px; }
.inuse { width: 122px; height: 17px; font: inherit; color: #333; background: #fff url("data:image/svg+xml,%3Csvg xmlns='http://www.w3.org/2000/svg' width='8' height='6'%3E%3Cpath d='M1 1l3 3 3-3' fill='none' stroke='%23777'/%3E%3C/svg%3E") no-repeat right 2px center; border: 0; appearance: none; padding: 0 2px; margin: 0 7px 0 2px; }
.caret { width: 10px; display: grid; place-items: center; }
.caret .icon { width: 6px; height: 6px; }
.zooms { margin-left: auto; margin-right: 273px; padding-left: 6px; border-left: 1px solid #fff; }
.comps { width: 355px; padding-left: 8px; }
.comps .tool { flex: 1; width: auto; }
.sim { width: 201px; padding-left: 29px; }
.tool.pressed { border: 1px solid; border-color: #999 #fff #fff #999; background: #e8e8e8; }
.analysis { display: flex; align-items: center; margin-left: 1px; }
.analysis .icon { width: 11px; height: 11px; }
.probes { width: 158px; padding: 0 1px 0 8px; }
.probes .tool { flex: 1; width: auto; }
.workspace { flex: 1; display: flex; border-top: 1px solid #8c8c8c; }
.toolbox { width: 132px; flex: none; display: flex; flex-direction: column; padding: 2px 7px 2px 3px; border-right: 1px solid #999; }
.boxhead { display: flex; align-items: center; height: 16px; gap: 2px; }
.boxhead h2 { flex: 1; margin: 0 3px 0 0; font-size: 10px; line-height: 16px; font-weight: 400; background: #cbd8e2; padding-left: 1px; }
.boxhead button { width: 10px; height: 11px; line-height: 9px; font-size: 8px; border: 1px solid; border-color: #fff #888 #888 #fff; display: grid; place-items: center; }
.boxhead .icon { width: 6px; height: 6px; }
.boxtools { display: flex; justify-content: space-between; padding: 7px 3px 0 2px; height: 23px; }
.tree { flex: 1; margin: 0; list-style: none; background: #fff; border: 1px solid #888; border-width: 1px 2px 2px 1px; padding: 0 0 0 6px; }
.tree li { height: 29px; }
.node { display: flex; align-items: center; height: 15px; }
.node .icon { width: 14px; height: 14px; margin-right: 3px; }
.twist { width: 8px; height: 8px; border: 1px solid #bbb; color: #888; font-size: 8px; line-height: 6px; text-align: center; margin-right: 4px; }
.twist + .icon { width: 12px; height: 12px; margin-right: 4px; }
.elbow { width: 8px; height: 8px; border: dotted #bbb; border-width: 0 0 1px 1px; margin: 0 2px 8px 16px; }
.current { background: #ececec; }
.boxtabs { display: flex; height: 17px; font-size: 9px; }
.boxtabs button { height: 15px; padding: 0 2px; }
.boxtabs .on { padding: 1px 1px 0 3px; border-bottom: 1px solid #888; }
.boxtabs .edge { border: 1px solid #777; border-top-color: #aaa; }
.boxtabs .cut { width: 12px; overflow: hidden; flex: none; margin-left: 2px; padding: 0 0 0 2px; }
.boxtabs .nudge { flex: 1; height: 14px; padding: 0; background: #f6f6f6; border-right: 1px solid #bbb; border-bottom: 1px solid #bbb; display: grid; place-items: center; }
.boxtabs .icon { width: 7px; height: 7px; }
.editor { flex: 1; min-width: 0; display: flex; flex-direction: column; padding: 2px 0 1px 2px; }
.frame { flex: 1; min-height: 0; display: grid; grid-template-columns: 1fr 16px; grid-template-rows: 1fr 17px; border: solid #808080; border-width: 2px 1px 1px 2px; }
.sheet { display: flex; flex-direction: column; background: #fff; min-width: 0; }
.ruler { display: flex; height: 25px; overflow: hidden; border-bottom: 1px solid #777; color: #888; font-family: 'Liberation Sans', sans-serif; font-size: 11px; line-height: 24px; }
.ruler span { flex: 0 0 120px; text-align: right; padding-right: 58px; border-right: 2px solid #888; }
.ruler span:first-child { flex-basis: 109px; }
.ruler .rest { flex: 1; padding: 0; border: 0; }
.circuit { flex: 1; width: 100%; display: block; }
.circuit text { font: bold 17px 'Liberation Sans', Arial, sans-serif; fill: #1b1b1b; }
.wire { fill: none; stroke: #b8343f; stroke-width: 1.25; }
.part { fill: none; stroke: #333; stroke-width: 1.25; }
.joint { fill: #b00d1e; }
.cursor { fill: #fff; stroke: #555; }
.vscroll { display: flex; justify-content: center; padding: 14px 3px 0 0; }
.vscroll i { width: 4px; height: 58%; background: #868686; }
.hscroll { display: flex; align-items: center; padding: 0 66px 4px 47px; }
.hscroll i { flex: 1; height: 4px; background: #868686; }
.doctabs { display: flex; align-items: center; height: 18px; padding-right: 1px; }
.doctabs button { display: flex; align-items: center; height: 17px; gap: 1px; padding: 0 1px 0 2px; border: 1px solid #777; border-top: 0; border-left: 0; }
.doctabs > .icon { width: 13px; height: 13px; }
.instruments { width: 21px; flex: none; align-self: flex-start; padding: 9px 2px 0 1px; border-bottom: 1px solid #bbb; margin-left: 1px; }
.stack { display: flex; flex-direction: column; height: 226px; }
.stack button { flex: 1; display: grid; place-items: center; }
.extra { display: flex; flex-direction: column; align-items: center; height: 32px; padding-top: 5px; border-top: 1px solid #c4c4c4; }
.extra small { font-size: 7px; line-height: 10px; }
.extra small.dim { color: #aaa; }
.extra.last { height: 22px; padding-top: 4px; }
.status { display: flex; align-items: center; height: 17px; border-top: 1px solid #d4d4d4; border-bottom: 1px solid #b8b8b8; padding-left: 1px; }
.cell { width: 122px; padding-left: 6px; border-right: 1px solid #ddd; }
.cell:nth-child(2) { width: 100px; }
.cell.empty { width: 125px; }
.keys { display: flex; gap: 1px; padding: 0 3px 0 2px; }
.keys i { width: 5px; height: 9px; border: 1px solid #bbb; border-width: 1px 0 0 1px; }
.taskbar { display: flex; align-items: center; height: 38px; background: #f0f1f2; }
.weather { display: flex; align-items: center; gap: 6px; width: 198px; padding-left: 16px; text-align: left; line-height: 13px; }
.weather .icon { width: 20px; height: 20px; }
.weather small { display: block; font-size: 10px; color: #777; }
.start .icon { width: 21px; height: 21px; }
.find { display: flex; align-items: center; width: 180px; height: 24px; margin: 0 2px 0 12px; padding: 0 2px 0 7px; border-radius: 12px; background: #fff; border-bottom: 1px solid #dcdcdc; }
.find .icon { width: 16px; height: 16px; }
.find input { flex: 1; min-width: 0; border: 0; outline: 0; background: none; font: inherit; font-size: 11px; padding: 0 0 0 6px; }
.find input::placeholder { color: #666; }
.find .ball { width: 38px; height: 20px; }
.apps { display: flex; width: 514px; height: 38px; }
.apps button { flex: 1; display: flex; flex-direction: column; align-items: center; justify-content: center; height: 34px; padding: 2px 2px 0; margin-top: 1px; border-radius: 4px; position: relative; }
.apps .active { background: #fdfdfd content-box; }
.apps .run::after { content: ''; position: absolute; bottom: 1px; width: 5px; height: 3px; border-radius: 2px; background: #888; }
.apps .active::after { width: 13px; background: #2d7f82; }
.appicon { position: relative; }
.appicon .icon { width: 21px; height: 21px; }
.appicon b { position: absolute; top: -5px; left: 12px; min-width: 13px; height: 13px; border-radius: 7px; background: #26797e; color: #fff; font-size: 8px; font-weight: 400; line-height: 13px; text-align: center; }
.appicon b.red { background: #d83a3f; height: 9px; line-height: 9px; border-radius: 3px; font-size: 7px; top: -1px; }
.appicon b.dot { background: #e8101a; min-width: 9px; height: 9px; top: -3px; }
.tray { margin-left: auto; display: flex; align-items: center; gap: 12px; padding-right: 16px; color: #333; }
.tray .icon { width: 14px; height: 14px; }
.lang { margin-left: 3px; }
.net { display: flex; gap: 6px; margin-left: 3px; }
.tray time { text-align: right; line-height: 13px; width: 54px; }
.tray time + .icon { margin-left: -6px; }
</style>
